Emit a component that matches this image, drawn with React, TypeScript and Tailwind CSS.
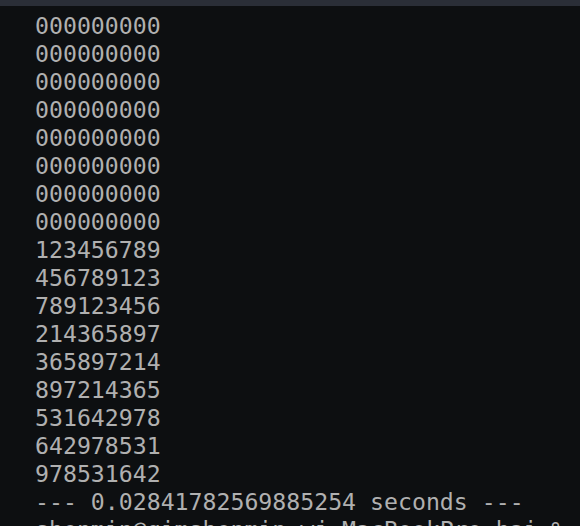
import React from "react";

const lines = [
  "000000000",
  "000000000",
  "000000000",
  "000000000",
  "000000000",
  "000000000",
  "000000000",
  "000000000",
  "123456789",
  "456789123",
  "789123456",
  "214365897",
  "365897214",
  "897214365",
  "531642978",
  "642978531",
  "978531642",
  "--- 0.02841782569885254 seconds ---",
  "shenmin@qimshenmin-wj-MacBookPro-hai % ",
];

export default function App() {
  return (
    <div className="w-[580px] h-[526px] overflow-hidden bg-[#0d0f11] flex flex-col">
      <div className="h-[6px] shrink-0 bg-[#2a2e37]" />
      <div
        className="pt-[6px] pl-[35px] text-[23.2px] leading-[28px] text-[#b0b0b0] whitespace-pre"
        style={{ fontFamily: '"DejaVu Sans Mono", "Liberation Mono", monospace' }}
      >
        {lines.map((l, i) => (
          <div key={i}>{l}</div>
        ))}
      </div>
    </div>
  );
}
